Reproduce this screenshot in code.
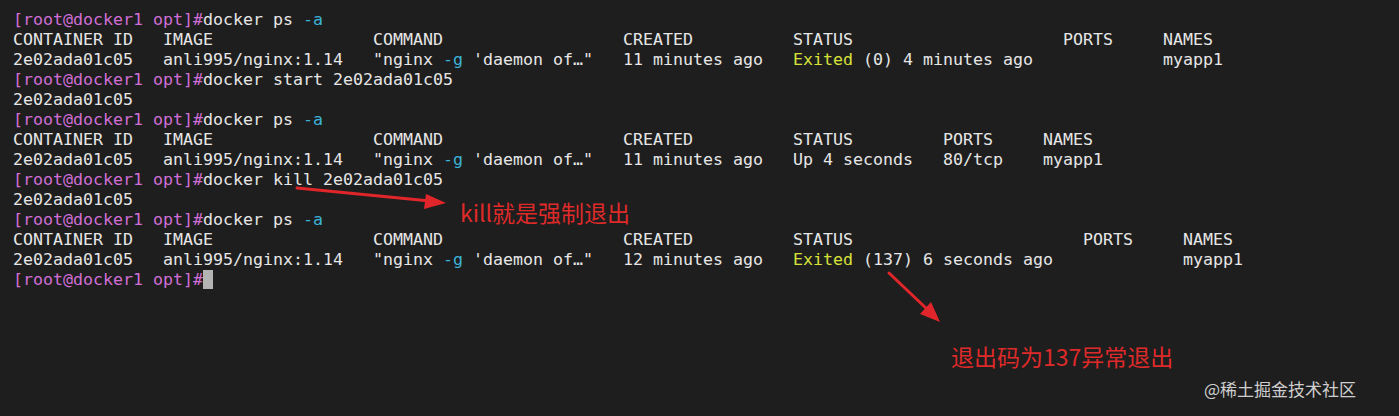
import React from "react";

const P = () => <span className="text-[#d06ed6]">[root@docker1 opt]#</span>;
const C = ({ children }: { children: React.ReactNode }) => <span className="text-[#3bb3d6]">{children}</span>;
const Y = ({ children }: { children: React.ReactNode }) => <span className="text-[#d7e03a]">{children}</span>;

export default function App() {
  const row = "h-[20px] leading-[20px] whitespace-pre";
  return (
    <div className="relative w-[1399px] h-[416px] bg-[#1e1e1e] overflow-hidden">
      <div
        className="pt-[10px] pl-[13px] text-[#e6e6e6] text-[16.61px]"
        style={{ fontFamily: '"DejaVu Sans Mono", monospace' }}
      >
        <div className={row}><P />docker ps <C>-a</C></div>
        <div className={row}>{"CONTAINER ID   IMAGE                COMMAND                  CREATED          STATUS                     PORTS     NAMES"}</div>
        <div className={row}>{'2e02ada01c05   anli995/nginx:1.14   "nginx '}<C>-g</C>{" 'daemon of…\"   11 minutes ago   "}<Y>Exited</Y>{" (0) 4 minutes ago             myapp1"}</div>
        <div className={row}><P />docker start 2e02ada01c05</div>
        <div className={row}>2e02ada01c05</div>
        <div className={row}><P />docker ps <C>-a</C></div>
        <div className={row}>{"CONTAINER ID   IMAGE                COMMAND                  CREATED          STATUS         PORTS     NAMES"}</div>
        <div className={row}>{'2e02ada01c05   anli995/nginx:1.14   "nginx '}<C>-g</C>{" 'daemon of…\"   11 minutes ago   Up 4 seconds   80/tcp    myapp1"}</div>
        <div className={row}><P />docker kill 2e02ada01c05</div>
        <div className={row}>2e02ada01c05</div>
        <div className={row}><P />docker ps <C>-a</C></div>
        <div className={row}>{"CONTAINER ID   IMAGE                COMMAND                  CREATED          STATUS                       PORTS     NAMES"}</div>
        <div className={row}>{'2e02ada01c05   anli995/nginx:1.14   "nginx '}<C>-g</C>{" 'daemon of…\"   12 minutes ago   "}<Y>Exited</Y>{" (137) 6 seconds ago             myapp1"}</div>
        <div className={row}><P /><span className="inline-block w-[10px] h-[19px] align-[-4px] bg-[#b4b4b4]"></span></div>
      </div>

      <svg className="absolute left-0 top-0" width="1399" height="416">
        <line x1="297" y1="188" x2="430" y2="201" stroke="#e0262a" strokeWidth="3" strokeLinecap="round" />
        <polygon points="446,203 426,194 424,209" fill="#e0262a" />
        <line x1="889" y1="273" x2="928" y2="310" stroke="#e0262a" strokeWidth="3" strokeLinecap="round" />
        <polygon points="940,322 920,314 931,302" fill="#e0262a" />
      </svg>

      <div
        className="absolute left-[460px] top-[197px] text-[23px] leading-[30px] text-[#df2a2a] whitespace-nowrap"
        style={{ fontFamily: '"Noto Sans CJK SC", "Noto Sans", sans-serif' }}
      >
        kill就是强制退出
      </div>
      <div
        className="absolute left-[951px] top-[342px] text-[23px] leading-[28px] text-[#df2a2a] whitespace-nowrap"
        style={{ fontFamily: '"Noto Sans CJK SC", "Noto Sans", sans-serif' }}
      >
        退出码为137异常退出
      </div>
      <div
        className="absolute left-[1204px] top-[377px] text-[17px] leading-[24px] text-[#cfcfcf] whitespace-nowrap"
        style={{ fontFamily: '"Noto Sans CJK SC", "Noto Sans", sans-serif' }}
      >
        @稀土掘金技术社区
      </div>
    </div>
  );
}
